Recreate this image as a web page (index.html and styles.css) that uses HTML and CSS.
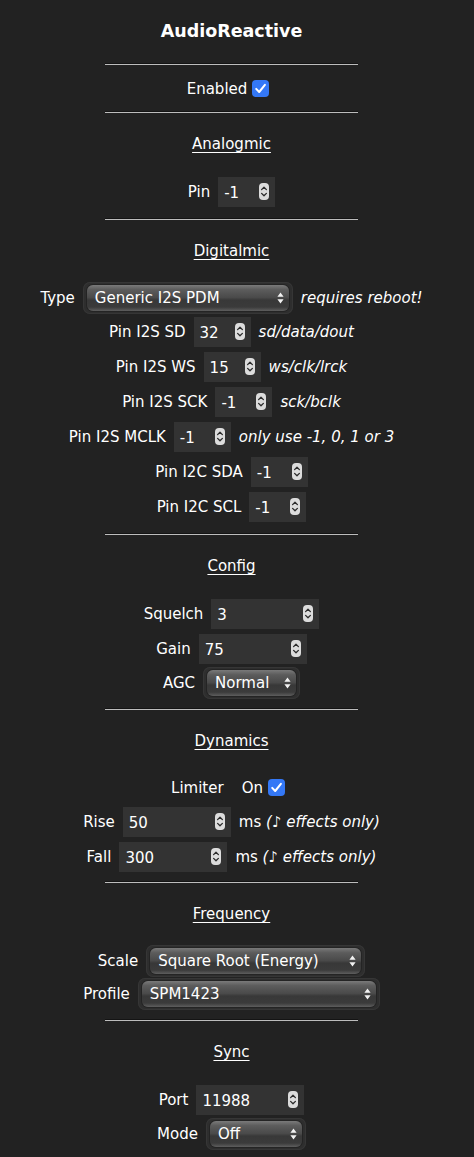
FILE: index.html
```html
<!DOCTYPE html>
<html>
  <head>
    <meta charset="utf-8">
    <title>AudioReactive</title>
    <link rel="stylesheet" href="styles.css">
  </head>
  <body>
    <svg class="defs" width="0" height="0">
      <symbol id="spin" viewBox="0 0 10 17">
        <rect x="0" y="0" width="10" height="17" rx="4" fill="#dcdcdc" />
        <path d="M2.6 6.6 L5 4.2 L7.4 6.6 M2.6 10.4 L5 12.8 L7.4 10.4" fill="none" stroke="#2b2b2b" stroke-width="1.3" stroke-linecap="round" stroke-linejoin="round" />
      </symbol>
      <symbol id="arrows" viewBox="0 0 7 12">
        <path d="M3.5 0.6 L6.6 4.8 H0.4 Z M3.5 11.4 L6.6 7.2 H0.4 Z" fill="#f2f2f2" />
      </symbol>
      <symbol id="tick" viewBox="0 0 17 17">
        <rect x="0" y="0" width="17" height="17" rx="4" fill="#3478f6" />
        <path d="M4.2 8.9 L7.2 12 L12.9 4.9" fill="none" stroke="#ffffff" stroke-width="2" stroke-linecap="round" stroke-linejoin="round" />
      </symbol>
    </svg>

    <main class="page">
      <h3 class="title">AudioReactive</h3>
      <hr>
      <div class="row top">
        <span>Enabled</span>
        <svg class="check"><use href="#tick" /></svg>
      </div>
      <hr>

      <div class="group">
        <p class="group-name"><u>Analogmic</u></p>
        <div class="row">
          <label>Pin</label>
          <span class="num">-1<svg class="spin"><use href="#spin" /></svg></span>
        </div>
      </div>
      <hr>

      <div class="group">
        <p class="group-name"><u>Digitalmic</u></p>
        <div class="row short">
          <label>Type</label>
          <span class="sel sel-type"><span class="sel-in">Generic I2S PDM<svg class="arr"><use href="#arrows" /></svg></span></span>
          <i>requires reboot!</i>
        </div>
        <div class="row">
          <label>Pin I2S SD</label>
          <span class="num">32<svg class="spin"><use href="#spin" /></svg></span>
          <i>sd/data/dout</i>
        </div>
        <div class="row">
          <label>Pin I2S WS</label>
          <span class="num">15<svg class="spin"><use href="#spin" /></svg></span>
          <i>ws/clk/lrck</i>
        </div>
        <div class="row">
          <label>Pin I2S SCK</label>
          <span class="num">-1<svg class="spin"><use href="#spin" /></svg></span>
          <i>sck/bclk</i>
        </div>
        <div class="row">
          <label>Pin I2S MCLK</label>
          <span class="num">-1<svg class="spin"><use href="#spin" /></svg></span>
          <i>only use -1, 0, 1 or 3</i>
        </div>
        <div class="row">
          <label>Pin I2C SDA</label>
          <span class="num">-1<svg class="spin"><use href="#spin" /></svg></span>
        </div>
        <div class="row">
          <label>Pin I2C SCL</label>
          <span class="num">-1<svg class="spin"><use href="#spin" /></svg></span>
        </div>
      </div>
      <hr>

      <div class="group">
        <p class="group-name"><u>Config</u></p>
        <div class="row">
          <label>Squelch</label>
          <span class="num wide">3<svg class="spin"><use href="#spin" /></svg></span>
        </div>
        <div class="row">
          <label>Gain</label>
          <span class="num wide">75<svg class="spin"><use href="#spin" /></svg></span>
        </div>
        <div class="row short">
          <label>AGC</label>
          <span class="sel sel-agc"><span class="sel-in">Normal<svg class="arr"><use href="#arrows" /></svg></span></span>
        </div>
      </div>
      <hr>

      <div class="group tight">
        <p class="group-name"><u>Dynamics</u></p>
        <div class="row short">
          <label>Limiter</label>
          <span class="on">On</span>
          <svg class="check"><use href="#tick" /></svg>
        </div>
        <div class="row">
          <label>Rise</label>
          <span class="num wide">50<svg class="spin"><use href="#spin" /></svg></span>
          <span>ms <i>(&#9834; effects only)</i></span>
        </div>
        <div class="row">
          <label>Fall</label>
          <span class="num wide">300<svg class="spin"><use href="#spin" /></svg></span>
          <span>ms <i>(&#9834; effects only)</i></span>
        </div>
      </div>
      <hr>

      <div class="group">
        <p class="group-name"><u>Frequency</u></p>
        <div class="row short">
          <label>Scale</label>
          <span class="sel sel-scale"><span class="sel-in">Square Root (Energy)<svg class="arr"><use href="#arrows" /></svg></span></span>
        </div>
        <div class="row short">
          <label>Profile</label>
          <span class="sel sel-profile"><span class="sel-in">SPM1423<svg class="arr"><use href="#arrows" /></svg></span></span>
        </div>
      </div>
      <hr>

      <div class="group">
        <p class="group-name"><u>Sync</u></p>
        <div class="row">
          <label>Port</label>
          <span class="num wide">11988<svg class="spin"><use href="#spin" /></svg></span>
        </div>
        <div class="row short">
          <label>Mode</label>
          <span class="sel sel-mode"><span class="sel-in">Off<svg class="arr"><use href="#arrows" /></svg></span></span>
        </div>
      </div>
    </main>
  </body>
</html>
```

FILE: styles.css
```css
body {
  margin: 0;
  background: #222222;
  color: #ffffff;
  font-family: "DejaVu Sans", Verdana, sans-serif;
  font-size: 15px;
}
.defs {
  position: absolute;
  width: 0;
  height: 0;
}
.page {
  width: 463px;
  text-align: center;
}
.title {
  margin: 0;
  height: 63px;
  line-height: 62px;
  font-size: 17.5px;
  font-weight: bold;
}
hr {
  width: 253px;
  height: 1px;
  margin: 0 auto;
  border: 0;
  border-top: 1px solid #141414;
  background: #bdbdbd;
}
.group {
  padding-bottom: 9px;
}
.group.tight {
  padding-bottom: 7px;
}
.group-name {
  margin: 0;
  height: 61px;
  line-height: 63px;
}
.group-name u {
  text-decoration-thickness: 1px;
  text-underline-offset: 3px;
}
.row {
  display: flex;
  justify-content: center;
  align-items: center;
  gap: 8px;
  height: 35px;
  white-space: nowrap;
}
.row.short {
  height: 33px;
}
.row.top {
  height: 46px;
  gap: 5px;
  padding-top: 1px;
  box-sizing: border-box;
}
.check {
  width: 17px;
  height: 17px;
  margin-right: 7px;
}
.on {
  margin-left: 10px;
  margin-right: -3px;
}
.num {
  display: inline-flex;
  align-items: center;
  justify-content: space-between;
  box-sizing: border-box;
  width: 57px;
  height: 30px;
  padding: 3px 6px 0 6px;
  background: #333333;
}
.num.wide {
  width: 108px;
}
.spin {
  width: 10px;
  height: 17px;
  margin-top: -3px;
}
.sel {
  display: inline-flex;
  box-sizing: border-box;
  height: 32px;
  padding: 3px 4px;
  background: #2e2e2e;
  border-radius: 7px;
  box-shadow: inset 0 0 0 1px #363636;
}
.sel-in {
  flex: 1;
  display: flex;
  align-items: center;
  justify-content: space-between;
  padding: 1px 5px 0 8px;
  border-radius: 6px;
  background: linear-gradient(#7a7a7a, #5c5c5c 18%, #4a4a4a 48%, #383838 58%, #3b3b3b 85%, #5e5e5e);
  box-shadow: 0 0 0 1px #242424;
}
.arr {
  width: 7px;
  height: 12px;
}
.sel-type {
  width: 210px;
}
.sel-agc {
  width: 97px;
}
.sel-scale {
  width: 219px;
}
.sel-profile {
  width: 242px;
}
.sel-mode {
  width: 100px;
}
```
